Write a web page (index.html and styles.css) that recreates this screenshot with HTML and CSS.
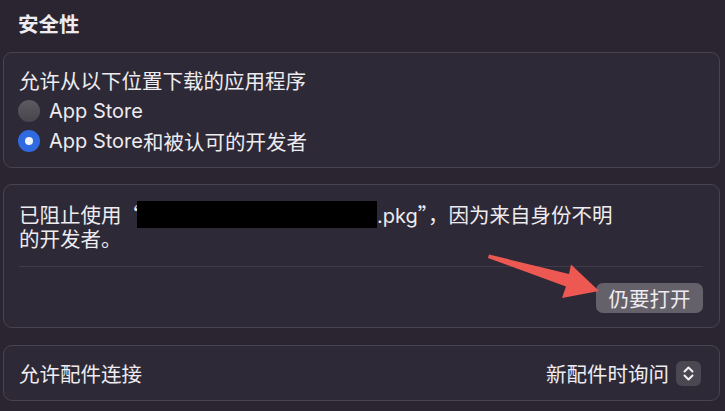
FILE: index.html
```html
<!DOCTYPE html>
<html lang="zh-CN">
<head>
<meta charset="utf-8">
<title>安全性</title>
<link rel="stylesheet" href="styles.css">
</head>
<body>
<div class="page">
  <h2 class="title">安全性</h2>

  <section class="card card-sources">
    <p class="line">允许从以下位置下载的应用程序</p>
    <label class="radio-row"><span class="radio"></span><span class="lat">App Store</span></label>
    <label class="radio-row"><span class="radio on"></span><span class="lat">App Store</span>和被认可的开发者</label>
  </section>

  <section class="card card-blocked">
    <p class="msg">已阻止使用<span class="q">“</span><span class="redact"></span><span class="lat">.pkg</span><span class="q">”，</span>因为来自身份不明<br>的开发者。</p>
    <div class="sep"></div>
    <div class="actions"><button class="btn">仍要打开</button></div>
    <svg class="arrow" viewBox="480 245 130 60" width="130" height="60" aria-hidden="true">
      <polygon points="489,254.5 569,274 571,264.5 599,291 562,298 566,286.5 488,258" fill="#ee5853"/>
    </svg>
  </section>

  <section class="card card-acc">
    <span>允许配件连接</span>
    <span class="popup">新配件时询问<span class="stepper"><svg viewBox="0 0 25 25" width="25" height="25"><path d="M8.5 10.5 L12.5 6.5 L16.5 10.5 M8.5 14.5 L12.5 18.5 L16.5 14.5" fill="none" stroke="#f2f0f4" stroke-width="2" stroke-linecap="round" stroke-linejoin="round"/></svg></span></span>
  </section>
</div>
</body>
</html>
```

FILE: styles.css
```css
html, body {
  margin: 0;
  padding: 0;
  background: #2a2530;
}

body {
  font-family: "Noto Sans CJK SC", "Noto Sans", sans-serif;
  font-size: 20.5px;
  line-height: 24px;
  color: #eeecf0;
}

.lat {
  font-family: "Inter", "Noto Sans CJK SC", sans-serif;
  font-size: 20px;
  line-height: 18px;
}

.page {
  padding: 11px 5px 0 3px;
}

.title {
  margin: 0 0 17px 15px;
  font-size: 20.5px;
  line-height: 24px;
  font-weight: 700;
}

.card {
  position: relative;
  background: #2d2936;
  border: 1px solid #47434f;
  border-radius: 9px;
  margin-bottom: 16px;
}

.line {
  margin: 0;
}

.card-sources {
  padding: 15px 16px 11px 15px;
}

.radio-row {
  display: flex;
  align-items: center;
  height: 30px;
}

.card-sources .line + .radio-row {
  margin-top: 4px;
}

.radio {
  width: 22px;
  height: 22px;
  border-radius: 50%;
  margin: 0 9px 0 -1px;
  background: linear-gradient(#5d5a62, #47454c);
  box-sizing: border-box;
}

.radio.on {
  background: #2f6ae0;
  border: 7px solid #2f6ae0;
  position: relative;
}

.radio.on::after {
  content: "";
  position: absolute;
  inset: 0;
  border-radius: 50%;
  background: #eef2fb;
}

.card-blocked {
  padding: 17px 16px 14px 15px;
  margin-bottom: 17px;
}

.msg {
  margin: 0;
  line-height: 24px;
}

.q {
  font-family: "Noto Sans CJK SC", sans-serif;
  line-height: 18px;
}

.msg .q:nth-of-type(1) {
  margin-right: -5px;
}

.redact {
  display: inline-block;
  width: 240px;
  height: 27px;
  background: #000;
  vertical-align: top;
  margin: -1px 0 -3px 0;
}

.sep {
  height: 1px;
  background: #3f3b47;
  margin: 16px 0 16px 0;
}

.actions {
  display: flex;
  justify-content: flex-end;
}

.btn {
  font: inherit;
  color: #eeecf0;
  background: #65616a;
  border: none;
  border-radius: 7px;
  height: 30px;
  width: 107px;
  padding: 0;
  line-height: 30px;
}

.arrow {
  position: absolute;
  left: 476px;
  top: 60px;
}

.card-acc {
  display: flex;
  align-items: center;
  justify-content: space-between;
  height: 56px;
  box-sizing: border-box;
  padding: 0 18px 0 15px;
  margin-bottom: 0;
}

.popup {
  display: flex;
  align-items: center;
  gap: 7px;
}

.stepper {
  display: block;
  width: 25px;
  height: 25px;
  border-radius: 6px;
  background: #4c4852;
}

.stepper svg {
  display: block;
}
```
